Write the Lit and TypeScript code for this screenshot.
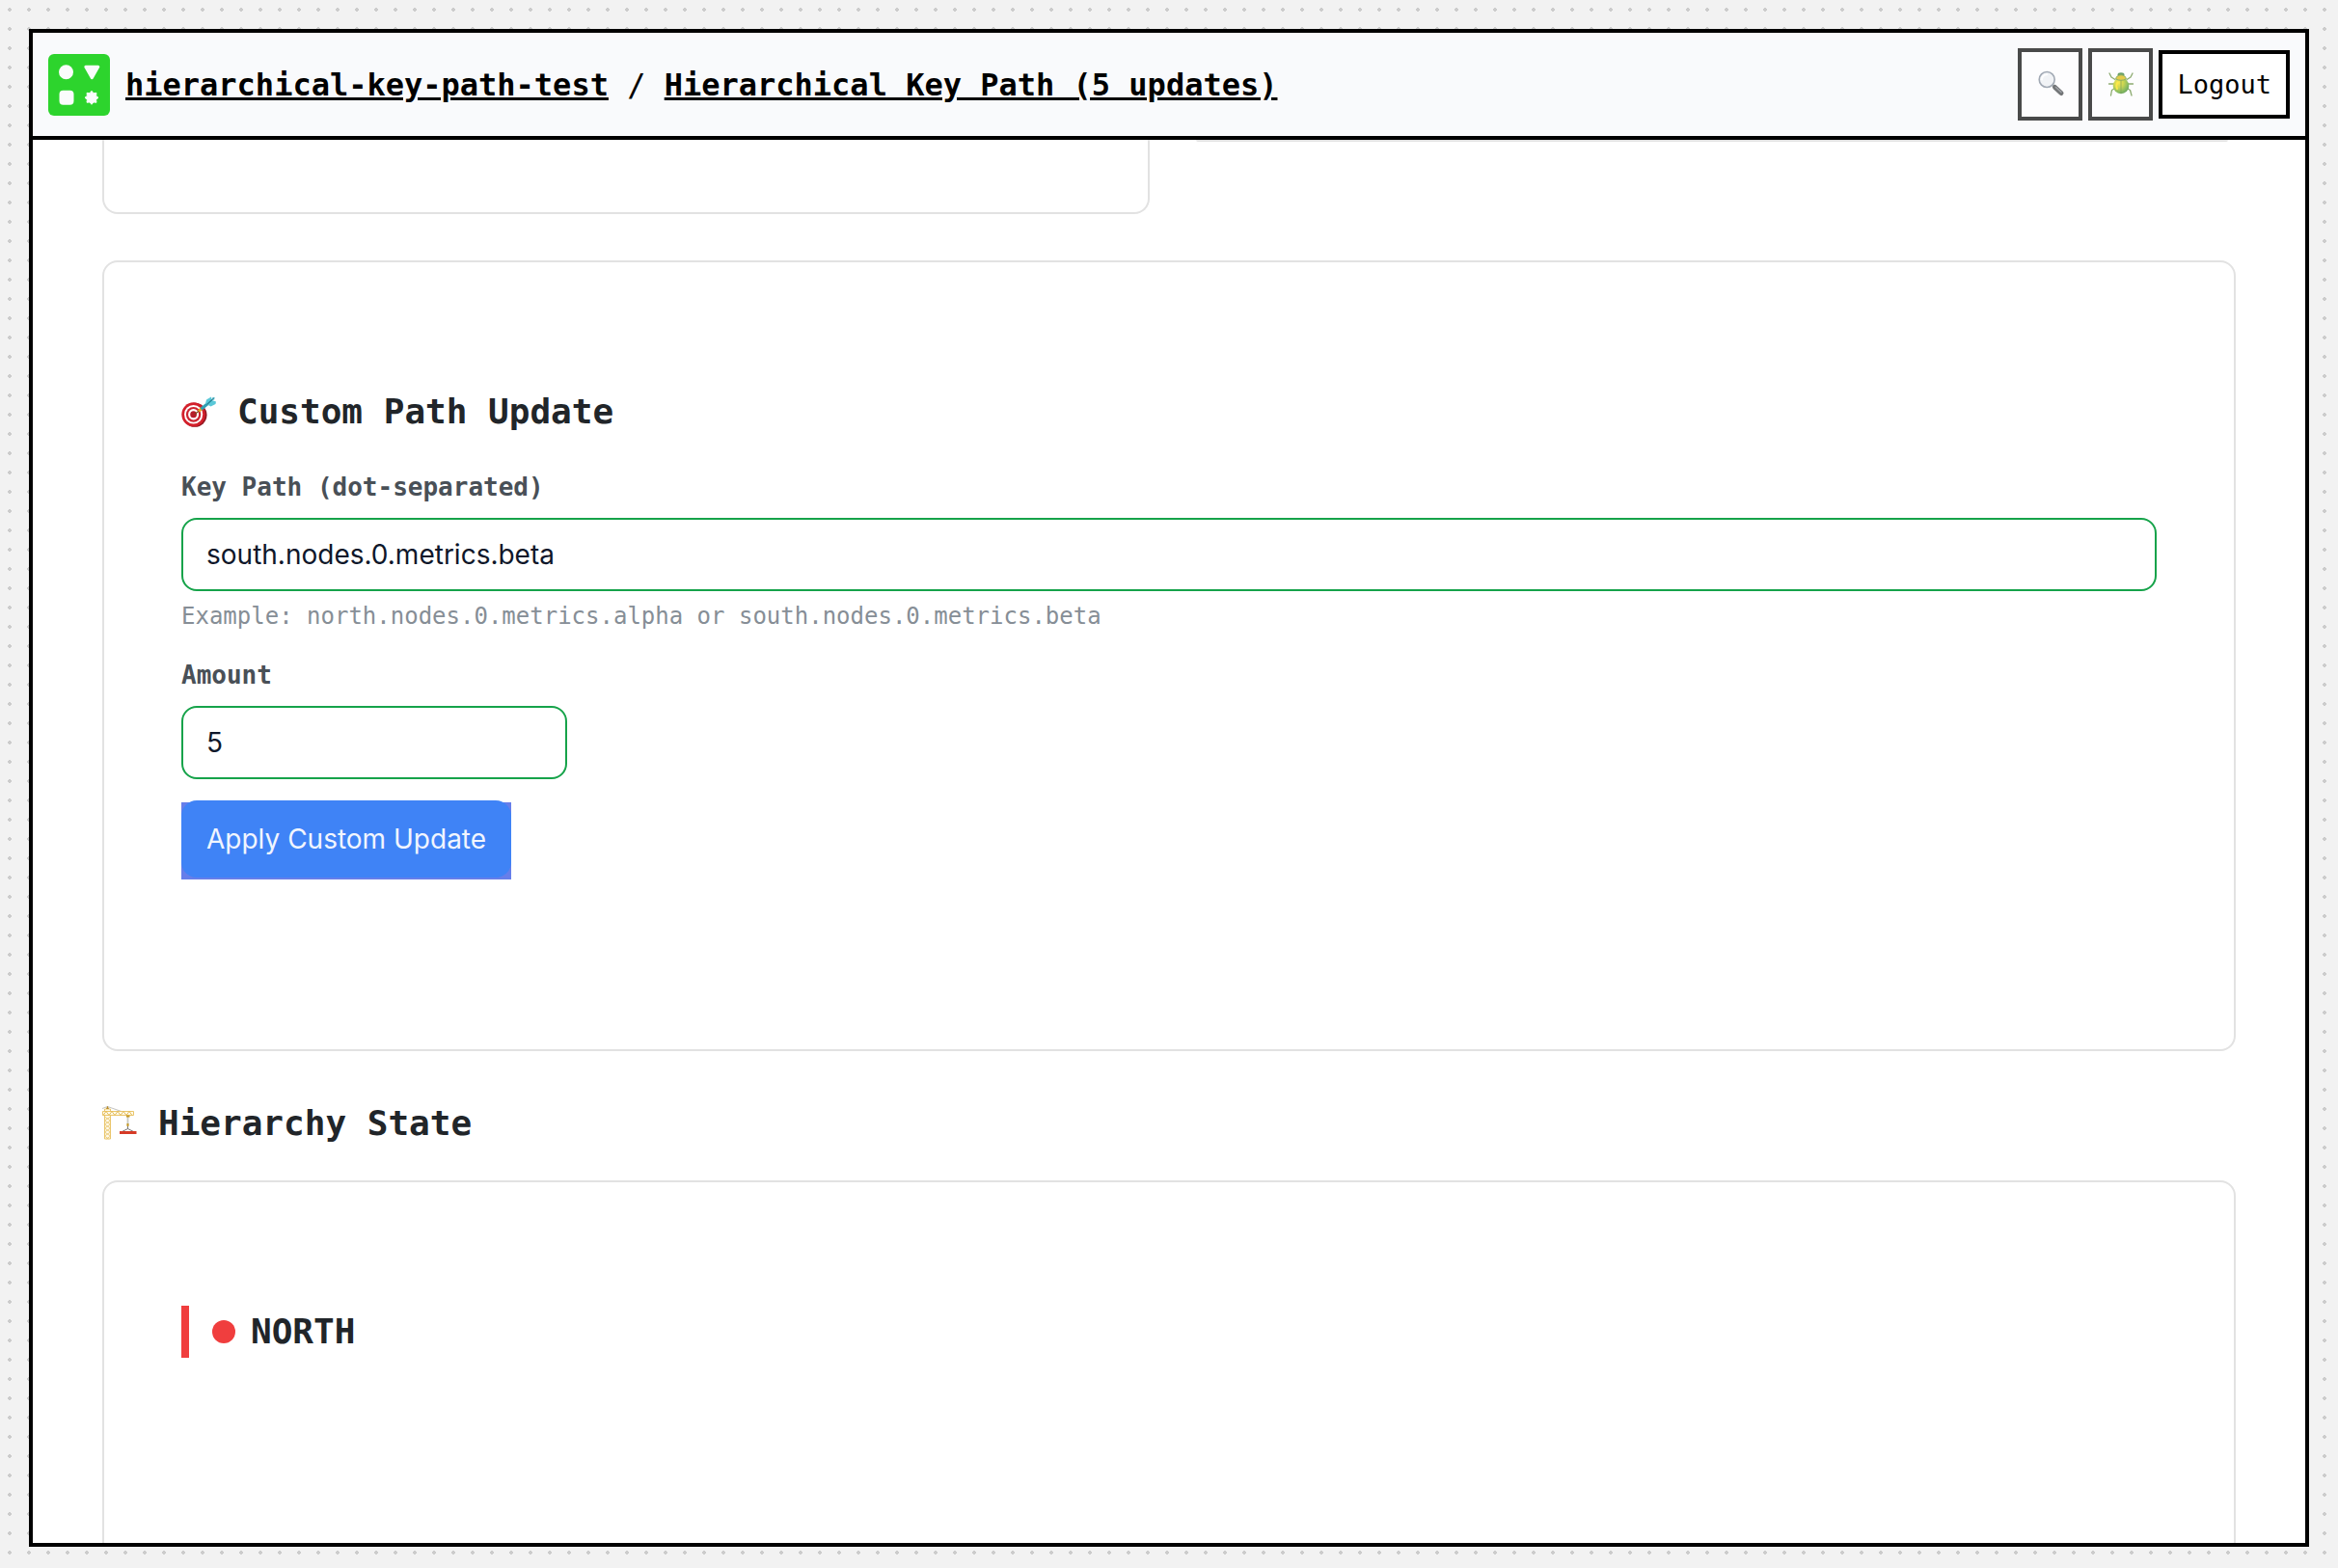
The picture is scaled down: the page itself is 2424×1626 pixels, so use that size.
import { LitElement, html, css, svg } from "lit";
import { customElement, state } from "lit/decorators.js";

const magnifier = svg`
  <path d="M16 14l4 4" stroke="#85898d" stroke-width="2.500" />
  <path d="M18.500 16.500l6.500 6" stroke="#3a3d40" stroke-width="5" stroke-linecap="round" />
  <path d="M19.500 16.500l5.500 5" stroke="#7b7f83" stroke-width="1.500" stroke-linecap="round" />
  <circle cx="10.200" cy="8.500" r="8" fill="#eef1f4" stroke="#7d8897" stroke-width="1.600" />
  <path d="M5 8.500a5.200 5.200 0 0 1 5.200-5.200" fill="none" stroke="#fff" stroke-width="2" stroke-linecap="round" />
`;

const beetle = svg`
  <defs>
    <radialGradient id="shell" cx="0.35" cy="0.3" r="0.8">
      <stop offset="0" stop-color="#ffdf00" />
      <stop offset="0.4" stop-color="#b5c60e" />
      <stop offset="0.75" stop-color="#55a01f" />
      <stop offset="1" stop-color="#237318" />
    </radialGradient>
  </defs>
  <g fill="none" stroke="#5f8a35" stroke-width="1.300" stroke-linecap="round" stroke-linejoin="round">
    <path d="M8 8.500L4 6 2 2M20 8.500L24 6l2-4M6.500 13H1.500M21.500 13h5M7 18l-2.500 1.500-1 5.500M21 18l2.500 1.500 1.500 5.500" />
  </g>
  <ellipse cx="14" cy="15" rx="8.300" ry="8.300" fill="url(#shell)" />
  <path d="M14 9v14" stroke="#4a8220" stroke-width="0.800" />
  <ellipse cx="14" cy="3.500" rx="3.500" ry="2.300" fill="#2f7a2c" />
  <path d="M8.700 8c0-2.500 2.300-4.200 5.300-4.200s5.300 1.700 5.300 4.200c-3 1.700-7.600 1.700-10.600 0z" fill="#dcb800" stroke="#4f8a26" stroke-width="0.900" />
  <path d="M10.500 11.500c-1.300 1.800-1.300 4.500-0.500 6.500" stroke="#ffe200" stroke-width="2" stroke-linecap="round" fill="none" />
`;

const target = svg`
  <ellipse cx="14" cy="21.300" rx="12.500" ry="12.500" fill="#8f1620" />
  <ellipse cx="12.600" cy="20.800" rx="12.300" ry="12.500" fill="#d3202b" />
  <ellipse cx="12.600" cy="20.800" rx="9.600" ry="9.800" fill="#fff" />
  <ellipse cx="12.600" cy="20.800" rx="7.700" ry="7.900" fill="#cc2430" />
  <ellipse cx="12.600" cy="20.800" rx="5.500" ry="5.700" fill="#fff" />
  <ellipse cx="12.600" cy="20.800" rx="3.400" ry="3.500" fill="#b61e2a" />
  <path d="M14 20.500l5-4" stroke="#7a4a20" stroke-width="1.300" />
  <path d="M18 17.500l3-2.800" stroke="#e8a91f" stroke-width="3" />
  <path d="M20.500 15.300L28 9" stroke="#2f9fb3" stroke-width="3.200" />
  <path d="M25 9.500l1-4L31 2.500l0.700 3.500L36 7.500l-0.500 2.500L30.500 12.500z" fill="#5ac8d8" />
  <path d="M26.500 10.500L33 4.500" stroke="#247f92" stroke-width="1.200" />
  <path d="M32 3.500l2.500-0.500-0.500 3z" fill="#2f9fb3" />
`;

const crane = svg`
  <g transform="translate(0 -1)">
    <path d="M0 3.500L5.500 1.500L27 9" fill="none" stroke="#a9a9a4" stroke-width="0.700" />
    <g fill="#fefaea" stroke="#e8c05c" stroke-width="0.900">
      <path d="M2.500 4h6v31h-6z" />
      <path d="M0.500 6.500h32v4H0.500z" />
    </g>
    <path d="M2.500 12l6 4-6 4 6 4-6 4 6 4-4 3M8.500 12l-6 4 6 4-6 4 6 4-6 4 4 3" fill="none" stroke="#e9c368" stroke-width="0.800" />
    <path d="M1 10.500l3-4 3 4 3-4 3 4 3-4 3 4 3-4 3 4 3-4 3 4" fill="none" stroke="#e3b74e" stroke-width="0.900" />
    <path d="M4 4l1.500-3.500L7 4z" fill="#b98c2a" />
    <path d="M26.500 11v10" stroke="#c9c9c2" stroke-width="1.800" />
    <path d="M25 10.500h3.500v2H25zM25.500 19h2v3h-2z" fill="#c79a25" />
    <path d="M26.500 22v2.500l-6 3M26.500 24.500l6 3" fill="none" stroke="#6c6c6c" stroke-width="0.900" />
    <path d="M18 27h17.500v3H18z" fill="#d63a26" />
  </g>
`;

const burst = Array.from({ length: 16 }, (_, i) => {
  const r = i % 2 ? 5 : 7;
  const a = (i * Math.PI) / 8 - Math.PI / 2;
  return `${45 + r * Math.cos(a)},${45.3 + r * Math.sin(a)}`;
}).join(" ");

const logo = svg`
  <rect width="64" height="64" rx="6" fill="#2dd42d" />
  <g fill="#fafcfc" stroke="#fafcfc" stroke-linejoin="round">
    <circle cx="18.500" cy="18.800" r="7.500" stroke="none" />
    <path d="M38.800 13.300h13l-6.500 11.400z" stroke-width="3" />
    <rect x="11.500" y="37.700" width="15" height="15" rx="4" stroke="none" />
    <polygon points=${burst} stroke-width="1" />
  </g>
`;

@customElement("app-root")
export class AppRoot extends LitElement {
  @state() private keyPath = "south.nodes.0.metrics.beta";
  @state() private amount = 5;

  static styles = css`
    :host {
      display: block;
      height: 100vh;
      font-family: Menlo, "DejaVu Sans Mono", monospace;
      color: #212529;
    }
    * {
      box-sizing: border-box;
    }
    .desk {
      height: 100%;
      padding: 30px 30px 22px;
      background: #f2f2f2 radial-gradient(circle, #ccc 2px, transparent 2px) 0 0 / 20px 20px;
    }
    .frame {
      height: 100%;
      display: flex;
      flex-direction: column;
      border: 4px solid #000;
      background: #fff;
    }
    .bar {
      display: flex;
      align-items: center;
      gap: 16px;
      padding: 16px;
      background: #f9fafc;
      border-bottom: 4px solid #000;
    }
    .logo {
      display: block;
      width: 64px;
      height: 64px;
    }
    .crumbs {
      flex: 1;
      font-size: 32px;
      line-height: 40px;
      color: #000;
      white-space: pre;
    }
    .crumbs a {
      color: inherit;
      font-weight: 700;
      text-decoration-thickness: 3px;
    }
    .actions {
      display: flex;
      align-items: center;
      gap: 6px;
    }
    .tool,
    .logout {
      border: 4px solid #000;
      background: #fff;
      margin: 0;
    }
    .tool {
      display: grid;
      place-items: center;
      width: 67px;
      height: 75px;
      padding: 0;
      opacity: 0.7;
    }
    .tool svg {
      width: 28px;
      height: 28px;
      overflow: visible;
    }
    .logout {
      padding: 16px 15px;
      font: 27px/31px Menlo, "DejaVu Sans Mono", monospace;
      color: #000;
    }
    .view {
      flex: 1;
      min-height: 0;
      overflow: hidden;
      padding: 0 72px;
    }
    .tails {
      display: grid;
      grid-template-columns: 1fr 1fr;
      align-items: start;
      gap: 40px;
      margin-bottom: 48px;
    }
    .tail {
      height: 77px;
      border: 2px solid #e2e2e2;
      border-top: 0;
      border-radius: 0 0 16px 16px;
    }
    .tail.short {
      height: 2px;
      border: 0;
      border-radius: 0;
      padding: 0 8px;
    }
    .tail.short::before {
      content: "";
      display: block;
      height: 2px;
      background: #e2e2e2;
      border-radius: 0 0 2px 2px;
    }
    .card {
      border: 2px solid #e2e2e2;
      border-radius: 16px;
      padding: 128px 80px 176px;
    }
    .card.node {
      padding-bottom: 204px;
    }
    .title {
      display: flex;
      align-items: center;
      gap: 22px;
      margin: 0;
      font-size: 36px;
      line-height: 54px;
      font-weight: 700;
    }
    .title svg {
      width: 36px;
      height: 36px;
    }
    .outer {
      margin: 48px 0 32px;
    }
    .form {
      display: flex;
      flex-direction: column;
      align-items: flex-start;
      margin-top: 32px;
    }
    .label {
      margin-bottom: 12px;
      font-size: 26px;
      line-height: 39px;
      font-weight: 700;
      color: #495057;
    }
    .field {
      width: 100%;
      height: 76px;
      margin: 0;
      padding: 0 24px;
      border: 2px solid #16a34a;
      border-radius: 16px;
      background: #fff;
      color: #0f172a;
      font: 28px/40px Inter, sans-serif;
      outline: 0;
      appearance: textfield;
    }
    .field.small {
      width: 400px;
      max-width: 100%;
      margin-bottom: 24px;
    }
    .hint {
      margin: 8px 0 24px;
      font-size: 24px;
      line-height: 36px;
      color: #868e96;
    }
    .shade {
      display: flex;
      background: #667eea;
    }
    .apply {
      height: 80px;
      margin: 0;
      padding: 0 26px;
      border: 0;
      border-radius: 16px;
      background: #3f83f6;
      color: #f1f5fe;
      font: 28px/40px Inter, sans-serif;
      transform: translateY(-2px);
    }
    .region {
      padding-left: 24px;
      border-left: 8px solid #f03e3e;
      gap: 16px;
    }
    .dot {
      width: 24px;
      height: 24px;
      border-radius: 50%;
      background: #f03e3e;
    }
  `;

  render() {
    return html`
      <div class="desk">
        <div class="frame">
          <header class="bar">
            <svg class="logo" viewBox="0 0 64 64" aria-hidden="true">${logo}</svg>
            <nav class="crumbs"><a href="#pattern">hierarchical-key-path-test</a> / <a href="#piece">Hierarchical Key Path (5 updates)</a></nav>
            <div class="actions">
              <button class="tool" aria-label="Search"><svg viewBox="0 0 28 28" fill="none">${magnifier}</svg></button>
              <button class="tool" aria-label="Debug"><svg viewBox="0 0 28 28">${beetle}</svg></button>
              <button class="logout">Logout</button>
            </div>
          </header>
          <main class="view">
            <div class="tails">
              <div class="tail"></div>
              <div class="tail short"></div>
            </div>
            <section class="card">
              <h3 class="title"><svg viewBox="0 0 36 36" aria-hidden="true">${target}</svg>Custom Path Update</h3>
              <form class="form" @submit=${(e: Event) => e.preventDefault()}>
                <label class="label" for="path">Key Path (dot-separated)</label>
                <input
                  class="field"
                  id="path"
                  type="text"
                  .value=${this.keyPath}
                  @input=${(e: Event) => (this.keyPath = (e.target as HTMLInputElement).value)}
                />
                <p class="hint">Example: north.nodes.0.metrics.alpha or south.nodes.0.metrics.beta</p>
                <label class="label" for="amount">Amount</label>
                <input
                  class="field small"
                  id="amount"
                  type="number"
                  .value=${String(this.amount)}
                  @input=${(e: Event) => (this.amount = (e.target as HTMLInputElement).valueAsNumber)}
                />
                <div class="shade"><button class="apply" type="submit">Apply Custom Update</button></div>
              </form>
            </section>
            <h3 class="title outer"><svg viewBox="0 0 36 36" aria-hidden="true">${crane}</svg>Hierarchy State</h3>
            <section class="card node">
              <h4 class="title region"><span class="dot"></span>NORTH</h4>
            </section>
          </main>
        </div>
      </div>
    `;
  }
}
